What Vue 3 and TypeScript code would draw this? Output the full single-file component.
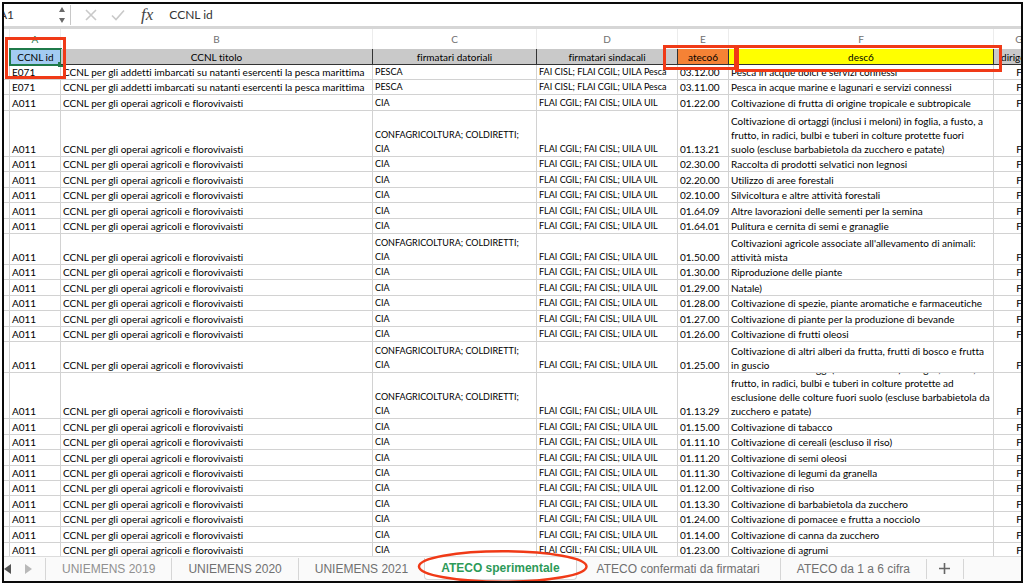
<script setup lang="ts">
import { ref } from 'vue'

interface Row {
  id: string
  title: string
  employers: string
  unions: string
  code: string
  desc: string
  size: string
}

const FISHING = 'CCNL per gli addetti imbarcati su natanti esercenti la pesca marittima'
const FARMING = 'CCNL per gli operai agricoli e florovivaisti'
const LONG = 'CONFAGRICOLTURA; COLDIRETTI;\nCIA'

const fish = (code: string, desc: string): Row => ({
  id: 'E071', title: FISHING, employers: 'PESCA', unions: 'FAI CISL; FLAI CGIL; UILA Pesca', code, desc, size: 's15',
})
const farm = (code: string, desc: string, size = 's15', employers = 'CIA'): Row => ({
  id: 'A011', title: FARMING, employers, unions: 'FLAI CGIL; FAI CISL; UILA UIL', code, desc, size,
})

const letters = ['A', 'B', 'C', 'D', 'E', 'F', 'G']

const rows: Row[] = [
  fish('03.12.00', 'Pesca in acque dolci e servizi connessi'),
  fish('03.11.00', 'Pesca in acque marine e lagunari e servizi connessi'),
  farm('01.22.00', 'Coltivazione di frutta di origine tropicale e subtropicale', 's16'),
  farm('01.13.21', 'Coltivazione di ortaggi (inclusi i meloni) in foglia, a fusto, a\nfrutto, in radici, bulbi e tuberi in colture protette fuori\nsuolo (escluse barbabietola da zucchero e patate)', 's46', LONG),
  farm('02.30.00', 'Raccolta di prodotti selvatici non legnosi'),
  farm('02.20.00', 'Utilizzo di aree forestali', 's16'),
  farm('02.10.00', 'Silvicoltura e altre attività forestali'),
  farm('01.64.09', 'Altre lavorazioni delle sementi per la semina', 's16'),
  farm('01.64.01', 'Pulitura e cernita di semi e granaglie'),
  farm('01.50.00', "Coltivazioni agricole associate all'allevamento di animali:\nattività mista", 's31', LONG),
  farm('01.30.00', 'Riproduzione delle piante'),
  farm('01.29.00', 'Natale)', 's16'),
  farm('01.28.00', 'Coltivazione di spezie, piante aromatiche e farmaceutiche'),
  farm('01.27.00', 'Coltivazione di piante per la produzione di bevande', 's16'),
  farm('01.26.00', 'Coltivazione di frutti oleosi'),
  farm('01.25.00', 'Coltivazione di altri alberi da frutta, frutti di bosco e frutta\nin guscio', 's31', LONG),
  farm('01.13.29', 'Coltivazione di ortaggi (inclusi i meloni) in foglia, a fusto, a\nfrutto, in radici, bulbi e tuberi in colture protette ad\nesclusione delle colture fuori suolo (escluse barbabietola da\nzucchero e patate)', 's46', LONG),
  farm('01.15.00', 'Coltivazione di tabacco', 's16'),
  farm('01.11.10', 'Coltivazione di cereali (escluso il riso)'),
  farm('01.11.20', 'Coltivazione di semi oleosi', 's16'),
  farm('01.11.30', 'Coltivazione di legumi da granella'),
  farm('01.12.00', 'Coltivazione di riso'),
  farm('01.13.30', 'Coltivazione di barbabietola da zucchero', 's16'),
  farm('01.24.00', 'Coltivazione di pomacee e frutta a nocciolo'),
  farm('01.14.00', 'Coltivazione di canna da zucchero', 's16'),
  farm('01.23.00', 'Coltivazione di agrumi'),
]

const tabs = [
  { name: 'UNIEMENS 2019', kind: 'faded' },
  { name: 'UNIEMENS 2020', kind: '' },
  { name: 'UNIEMENS 2021', kind: '' },
  { name: 'ATECO sperimentale', kind: '' },
  { name: 'ATECO confermati da firmatari', kind: 'wide' },
  { name: 'ATECO da 1 a 6 cifra', kind: '' },
]
const active = ref('ATECO sperimentale')
const cellName = ref('A1')
const formula = ref('CCNL id')
</script>

<template>
  <main class="window">
    <div class="formula-bar">
      <div class="name-box">
        <input v-model="cellName" class="name-input" aria-label="Casella nome">
        <button class="stepper" aria-label="Scegli cella">
          <svg width="8" height="18" viewBox="0 0 8 18"><path d="M4 1 7 6H1ZM4 17 1 12H7Z" fill="#6a6a6a" /></svg>
        </button>
      </div>
      <button class="tool" aria-label="Annulla">
        <svg width="12" height="12" viewBox="0 0 12 12"><path d="M1 1 11 11M11 1 1 11" stroke="#c9c9c9" stroke-width="1.6" fill="none" /></svg>
      </button>
      <button class="tool" aria-label="Conferma">
        <svg width="14" height="12" viewBox="0 0 14 12"><path d="M1 6.5 5 10.5 13 1.5" stroke="#c9c9c9" stroke-width="1.6" fill="none" /></svg>
      </button>
      <button class="tool fx" aria-label="Inserisci funzione">fx</button>
      <input v-model="formula" class="formula-input" aria-label="Barra della formula">
    </div>

    <div class="sheet">
      <table>
        <colgroup>
          <col class="c-gutter"><col class="c-a"><col class="c-b"><col class="c-c"><col class="c-d"><col class="c-e"><col><col class="c-g">
        </colgroup>
        <thead>
          <tr class="letters">
            <td></td>
            <th v-for="l in letters" :key="l" scope="col" :class="{ current: l === 'A' }">{{ l }}</th>
          </tr>
          <tr class="titles">
            <td></td>
            <th scope="col" class="selected">CCNL id<span class="handle"></span><span class="mark mark-a"></span></th>
            <th scope="col">CCNL titolo</th>
            <th scope="col">firmatari datoriali</th>
            <th scope="col">firmatari sindacali</th>
            <th scope="col" class="orange">ateco6<span class="mark mark-e"></span></th>
            <th scope="col" class="yellow">desc6<span class="mark mark-f"></span></th>
            <th scope="col">dirigenti</th>
          </tr>
        </thead>
        <tbody>
          <tr v-for="row in rows" :key="row.code" :class="row.size">
            <td></td>
            <td><div class="cell">{{ row.id }}</div></td>
            <td><div class="cell">{{ row.title }}</div></td>
            <td><div class="cell caps">{{ row.employers }}</div></td>
            <td><div class="cell caps">{{ row.unions }}</div></td>
            <td><div class="cell">{{ row.code }}</div></td>
            <td><div class="cell">{{ row.desc }}</div></td>
            <td><div class="cell centered">F</div></td>
          </tr>
        </tbody>
      </table>
    </div>

    <nav class="tabs" aria-label="Fogli">
      <button class="arrow" aria-label="Foglio precedente">
        <svg width="7" height="10" viewBox="0 0 7 10"><path d="M7 0V10L0 5Z" fill="#555" /></svg>
      </button>
      <button class="arrow next" aria-label="Foglio successivo">
        <svg width="7" height="10" viewBox="0 0 7 10"><path d="M0 0V10L7 5Z" fill="#b9b9b9" /></svg>
      </button>
      <button
        v-for="tab in tabs" :key="tab.name" class="tab"
        :class="[tab.kind, { active: tab.name === active }]" @click="active = tab.name"
      >
        {{ tab.name }}
        <svg v-if="tab.name === active" class="ring" viewBox="0 0 174 35">
          <ellipse cx="87" cy="17.5" rx="85" ry="15.5" fill="none" stroke="#f03a17" stroke-width="2.5" />
        </svg>
      </button>
      <button class="add" aria-label="Aggiungi foglio">
        <svg width="11" height="11" viewBox="0 0 11 11"><path d="M5.5 0V11M0 5.5H11" stroke="#666" stroke-width="1.6" /></svg>
      </button>
    </nav>
  </main>
</template>

<style>
html, body { background: #fff; }
#app { padding-top: 2px; }
</style>

<style scoped>
* { box-sizing: border-box; }
button, input { border: 0; padding: 0; margin: 0; background: none; font: inherit; color: inherit; outline: 0; }
.window {
  display: flex; flex-direction: column; height: calc(100vh - 3px); margin: 0 1px 0 2px; overflow: hidden;
  border: 2px solid #0a0a0a; background: #fff; color: #000;
  font: 10px/14px Lato, "Liberation Sans", sans-serif; font-variant-ligatures: none;
}

.formula-bar { display: flex; align-items: center; flex: none; height: 25px; padding-bottom: 1px; border-bottom: 3px solid #d6d6d6; }
.name-box { display: flex; align-items: center; width: 67px; height: 20px; border-right: 1px solid #c8c8c8; overflow: hidden; flex: none; }
.name-input { width: 56px; margin-left: -5px; font-size: 12px; color: #333; }
.stepper { display: flex; margin-left: 3px; }
.tool { display: flex; flex: none; margin-left: 14px; }
.fx { font: italic 17px/18px "Liberation Serif", serif; color: #444; margin-left: 16px; }
.formula-input { flex: 1; min-width: 0; margin-left: 16px; font-size: 12px; color: #333; }

.sheet { flex: 1; min-height: 0; overflow: hidden; }
table { width: calc(100% + 24px); table-layout: fixed; border-collapse: separate; border-spacing: 0; }
.c-gutter { width: 6px; }
.c-a, .c-e, .c-g { width: 51px; }
.c-b { width: 312px; }
.c-c { width: 164px; }
.c-d { width: 141px; }
th, td { padding: 0; font-weight: 400; white-space: pre; border-right: 1px solid #d2d2d2; }
.letters th, .letters td { height: 20px; color: #707070; border-right-color: #ececec; }
.letters .current { color: #2c7a50; }
.titles td { height: 16px; }
.titles th { position: relative; height: 16px; background: #c9c9c9; border-right: 1px solid #333; border-bottom: 1px solid #333; text-align: center; }
.titles .selected { background: #a3cbf2; box-shadow: 0 0 0 1px #1f7a4a; border: 1px solid #1f7a4a; }
.titles .orange { background: #f58235; }
.titles .yellow { background: #ffff00; }
.handle { position: absolute; right: -3px; bottom: -3px; width: 5px; height: 5px; background: #1f7a4a; }
.mark { position: absolute; z-index: 2; border: 3px solid #f03a17; }
.mark-a { inset: -13px -6px -15px -6px; }
.mark-e { inset: -4px -9px -6px -15px; }
.mark-f { inset: -4px -9px -8px 6px; border-left-width: 4px; }

tbody td { border-bottom: 1px solid #d2d2d2; }
.cell { display: flex; align-items: flex-end; padding-left: 2px; overflow: hidden; }
.caps { font-size: 9px; }
.centered { justify-content: center; padding: 0; }
.s15 .cell { height: 14px; }
.s16 .cell { height: 15px; }
.s31 .cell { height: 30px; }
.s46 .cell { height: 45px; }

.tabs {
  display: flex; align-items: center; flex: none; height: 25px; padding-bottom: 1px; border-top: 1px solid #dcdcdc;
  background: #fafafa; color: #707070; font: 12px/14px "Liberation Sans", sans-serif;
}
.arrow { display: flex; flex: none; }
.next { margin: 0 13px 0 14px; }
.tab { position: relative; flex: none; height: 22px; padding: 0 16px; white-space: nowrap; border-left: 1px solid #d6d6d6; }
.faded { color: #909090; }
.active { border: 1px solid #d6d6d6; border-top: 0; border-radius: 0 0 4px 4px; background: #fff; color: #2d9a58; font-weight: 700; }
.active + .tab { border-left: 0; }
.wide { padding: 0 20px; }
.ring { position: absolute; left: -8px; top: -9px; width: calc(100% + 21px); height: 35px; overflow: visible; pointer-events: none; z-index: 3; }
.add { display: flex; align-items: center; justify-content: center; flex: none; width: 38px; height: 20px; border: solid #d6d6d6; border-width: 0 1px; }
</style>
